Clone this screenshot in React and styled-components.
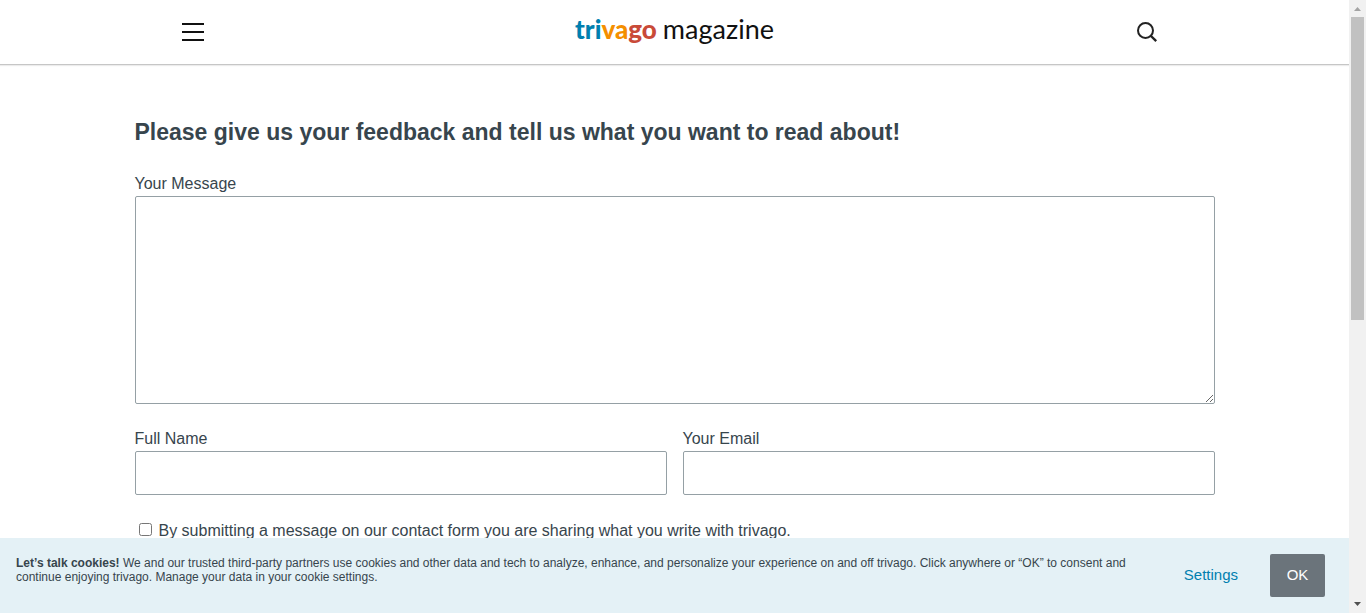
import React from "react";
import styled, { createGlobalStyle } from "styled-components";

const GlobalStyle = createGlobalStyle`
  *, *::before, *::after { box-sizing: border-box; }
  body {
    margin: 0;
    background: #fff;
    color: #37454d;
    font: 16px/24px "Liberation Sans", Arial, sans-serif;
  }
  button, input, textarea { font: inherit; color: inherit; }
`;

const Shell = styled.div`
  display: flex;
  height: 100vh;
`;

const Page = styled.div`
  flex: 1;
  min-width: 0;
  display: flex;
  flex-direction: column;
`;

const Header = styled.header`
  flex: none;
  height: 65px;
  border-bottom: 1px solid #c6c6c6;
  box-shadow: 0 1px 1px #ececec;
`;

const HeaderInner = styled.div`
  display: grid;
  grid-template-columns: 1fr auto 1fr;
  align-items: center;
  max-width: 1080px;
  height: 64px;
  margin: 0 auto;
  padding: 0 47px;
`;

const IconButton = styled.button`
  display: flex;
  justify-self: ${({ $end }) => ($end ? "end" : "start")};
  margin: 0 ${({ $end }) => ($end ? "10px" : "0")} 0 0;
  padding: 0;
  border: 0;
  background: none;
  cursor: pointer;
`;

const Logo = styled.a`
  display: flex;
  align-items: baseline;
  gap: 6px;
  padding-bottom: 6px;
  font: 27px/28px Lato, sans-serif;
  color: #111;
  text-decoration: none;
`;

const Brand = styled.span`
  font-size: 26px;
  font-weight: 900;
`;

const Tint = styled.span`
  color: ${({ $color }) => $color};
`;

const Content = styled.main`
  flex: 1;
  min-height: 0;
  overflow: hidden;
`;

const Form = styled.form`
  max-width: 1080px;
  margin: 0 auto;
  padding-top: 51px;
`;

const Title = styled.h1`
  margin: 0 0 24px;
  font-size: 23px;
  line-height: 32px;
`;

const Field = styled.div`
  display: flex;
  flex-direction: column;
  margin-bottom: 23px;
`;

const FieldRow = styled.div`
  display: grid;
  grid-template-columns: 1fr 1fr;
  gap: 16px;
`;

const Label = styled.label`
  line-height: 24px;
`;

const TextInput = styled.input`
  width: 100%;
  height: 44px;
  padding: 8px;
  border: 1px solid #95a0a5;
  border-radius: 2px;
  background: #fff;
`;

const MessageBox = styled.textarea`
  width: 100%;
  height: 208px;
  padding: 8px;
  border: 1px solid #95a0a5;
  border-radius: 2px;
  background: #fff;
  resize: vertical;
`;

const Consent = styled.label`
  display: flex;
  align-items: center;
  gap: 7px;
  padding: 1px 0 0 4px;
`;

const Checkbox = styled.input`
  width: 13px;
  height: 13px;
  margin: 0 0 4px;
`;

const CookieBar = styled.section`
  flex: none;
  display: flex;
  align-items: flex-start;
  padding: 16px 24px 16px 16px;
  background: #e4f1f6;
`;

const CookieText = styled.p`
  flex: 1;
  margin: 2px 48px 0 0;
  font-size: 12px;
  line-height: 14px;
`;

const SettingsButton = styled.button`
  height: 43px;
  margin-right: 32px;
  padding: 0 0 2px;
  border: 0;
  background: none;
  color: #007faf;
  font-size: 15px;
  cursor: pointer;
`;

const OkButton = styled.button`
  width: 55px;
  height: 43px;
  padding: 0 0 2px;
  border: 0;
  border-radius: 2px;
  background: #6b747b;
  color: #fff;
  font-size: 15px;
  cursor: pointer;
`;

const ScrollTrack = styled.div`
  flex: none;
  display: flex;
  flex-direction: column;
  align-items: center;
  width: 17px;
  background: #f1f1f1;
`;

const ScrollArrow = styled.svg`
  flex: none;
  display: block;
  width: 17px;
  height: 17px;
  fill: ${({ $dim }) => ($dim ? "#a3a3a3" : "#505050")};
`;

const ScrollRail = styled.div`
  flex: 1;
  width: 13px;
`;

const ScrollThumb = styled.div`
  height: 52.4%;
  background: #c1c1c1;
`;

export default function App() {
  return (
    <>
      <GlobalStyle />
      <Shell>
        <Page>
          <Header>
            <HeaderInner>
              <IconButton type="button" aria-label="Menu">
                <svg width="22" height="20" viewBox="0 0 22 20" fill="#111">
                  <path d="M0 1h22v2H0zM0 9h22v2H0zM0 17h22v2H0z" />
                </svg>
              </IconButton>
              <Logo href="#">
                <Brand>
                  <Tint $color="#007faf">tri</Tint>
                  <Tint $color="#f48f00">va</Tint>
                  <Tint $color="#c94a38">go</Tint>
                </Brand>
                <span>magazine</span>
              </Logo>
              <IconButton type="button" aria-label="Search" $end>
                <svg width="22" height="22" viewBox="0 0 22 22" fill="none" stroke="#222" strokeWidth="2">
                  <circle cx="9.5" cy="9.5" r="7.5" />
                  <path d="M15 15l5.2 5.2" strokeWidth="2.4" />
                </svg>
              </IconButton>
            </HeaderInner>
          </Header>
          <Content>
            <Form>
              <Title>Please give us your feedback and tell us what you want to read about!</Title>
              <Field>
                <Label htmlFor="message">Your Message</Label>
                <MessageBox id="message" />
              </Field>
              <FieldRow>
                <Field>
                  <Label htmlFor="name">Full Name</Label>
                  <TextInput id="name" type="text" />
                </Field>
                <Field>
                  <Label htmlFor="email">Your Email</Label>
                  <TextInput id="email" type="email" />
                </Field>
              </FieldRow>
              <Consent>
                <Checkbox type="checkbox" />
                By submitting a message on our contact form you are sharing what you write with trivago.
              </Consent>
            </Form>
          </Content>
          <CookieBar aria-label="Cookies">
            <CookieText>
              <b>Let’s talk cookies!</b> We and our trusted third-party partners use cookies and other data and
              tech to analyze, enhance, and personalize your experience on and off trivago. Click anywhere or
              “OK” to consent and continue enjoying trivago. Manage your data in your cookie settings.
            </CookieText>
            <SettingsButton type="button">Settings</SettingsButton>
            <OkButton type="button">OK</OkButton>
          </CookieBar>
        </Page>
        <ScrollTrack aria-hidden="true">
          <ScrollArrow viewBox="0 0 17 17" $dim>
            <path d="M5 11h7L8.500 7z" />
          </ScrollArrow>
          <ScrollRail>
            <ScrollThumb />
          </ScrollRail>
          <ScrollArrow viewBox="0 0 17 17">
            <path d="M5 6h7L8.500 10z" />
          </ScrollArrow>
        </ScrollTrack>
      </Shell>
    </>
  );
}
